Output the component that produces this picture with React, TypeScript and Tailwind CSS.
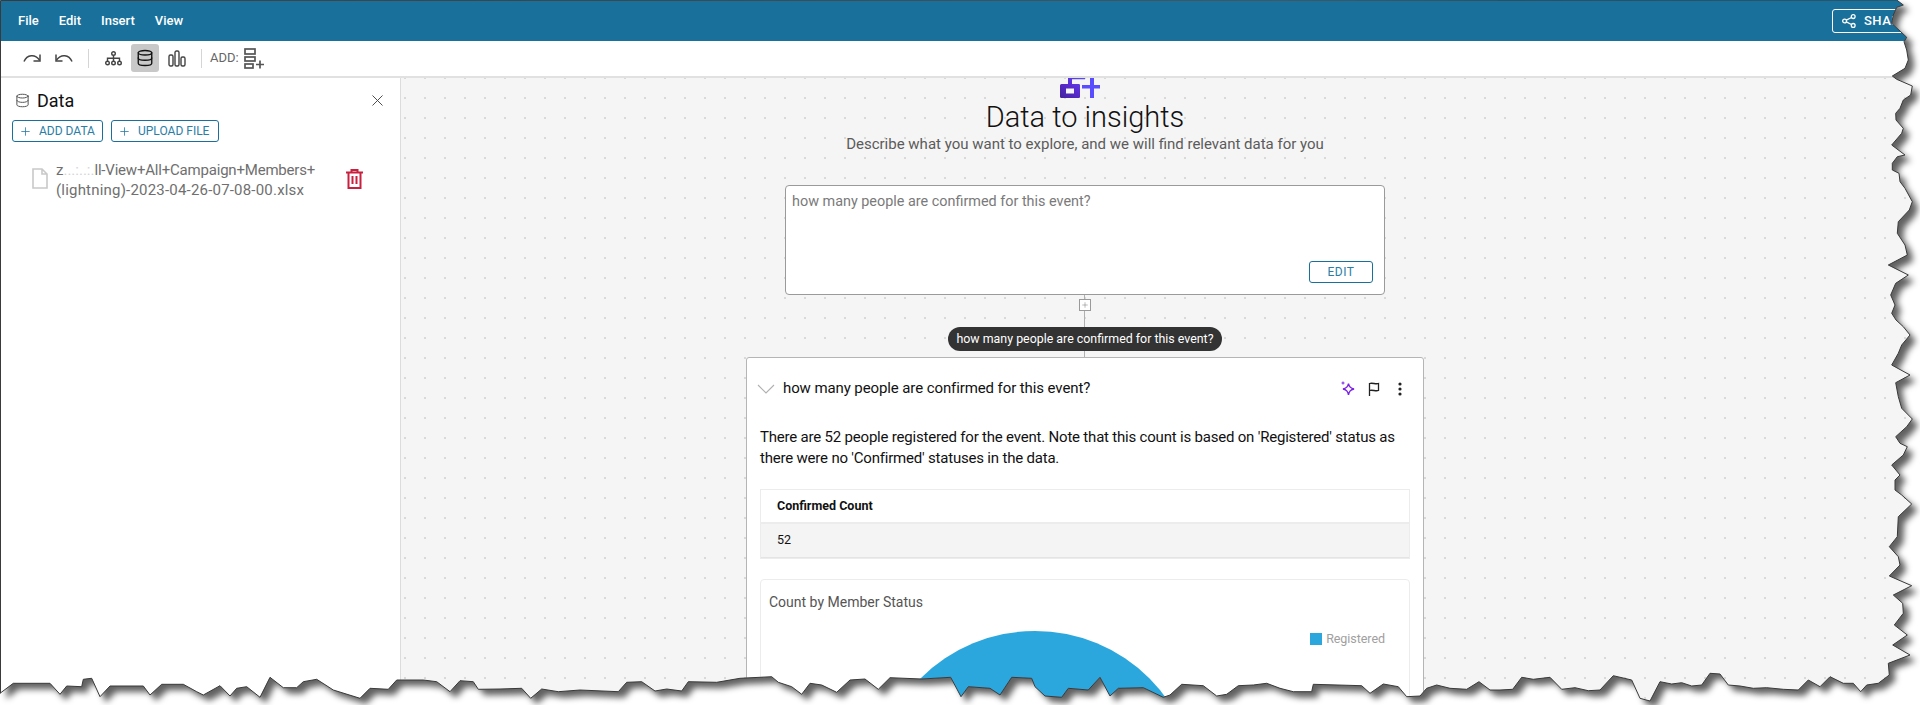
import { Database, Plus, X } from "lucide-react";

// torn page edge, traced from zoomed crops (crop px / 3 + crop origin)
const rightTop = [[110,0],[130,15],[110,22],[100,45],[95,70],[140,112],[132,125],[140,150],[145,180],[135,205],[97,228],[110,238],[157,258],[152,285],[130,300],[120,325],[107,340],[108,360],[130,385],[125,400],[95,435],[135,465],[112,470],[97,490],[97,510],[117,520],[120,545],[135,565],[157,605],[148,630],[115,665],[112,700],[135,735],[142,765],[85,795],[145,825],[107,850],[92,885],[105,915],[95,940]];
const rightBottom = [[108,0],[130,20],[150,45],[125,75],[115,100],[95,135],[150,165],[107,188],[115,230],[125,265],[157,297],[140,320],[107,350],[120,370],[142,380],[130,405],[95,435],[120,465],[105,480],[105,510],[125,525],[155,552],[115,590],[112,650],[88,680],[115,710],[120,735],[88,768],[155,797],[100,825],[128,850],[130,880],[103,915],[142,945]];
const bottomD = [[1178,75],[1230,105],[1165,130],[1168,165],[1135,190],[1100,195],[1082,215],[1060,190],[1030,190],[990,170],[960,200],[925,180],[895,210],[850,208],[800,203],[760,205],[720,198],[685,195],[660,162],[630,160],[605,195],[575,198],[545,188],[515,192],[480,185],[450,243],[420,235],[395,180],[340,167],[300,210],[265,212],[225,203],[185,208],[150,172],[100,178],[65,172],[38,208]];
const bottomC = [[1500,150],[1470,150],[1437,125],[1400,148],[1350,145],[1310,135],[1280,145],[1260,168],[1220,170],[1195,140],[1150,132],[1110,160],[1085,137],[940,133],[935,155],[880,155],[840,145],[800,130],[760,135],[715,137],[680,163],[650,168],[610,137],[545,133],[510,165],[490,172],[430,143],[355,145],[330,168],[300,112],[265,150],[205,145],[185,172],[135,168],[105,140],[95,115],[35,112]];
const bottomB = [[1500,165],[1470,145],[1405,140],[1383,170],[1352,112],[1265,117],[1170,113],[1135,148],[1095,117],[1050,120],[1010,157],[965,135],[930,130],[905,163],[875,140],[835,127],[815,110],[720,115],[650,127],[565,125],[545,153],[500,147],[465,153],[425,125],[380,127],[355,155],[240,150],[175,155],[125,147],[92,175],[65,145]];
const bottomA = [[1500,147],[1435,148],[1420,125],[1380,122],[1350,155],[1310,125],[1270,120],[1190,120],[1165,148],[1110,145],[1080,175],[1000,150],[950,118],[910,125],[890,143],[850,143],[810,112],[780,172],[740,140],[710,145],[690,168],[660,137],[610,165],[590,155],[550,133],[485,133],[450,165],[430,138],[330,138],[300,170],[275,115],[250,118],[245,140],[200,138],[180,163],[150,130],[40,130],[0,160]];

function mapped(list: number[][], ox: number, oy: number) {
  return list.map(([x, y]) => [ox + x / 3, oy + y / 3]);
}

const edge = [
  [0.5, 0.5],
  ...mapped(rightTop, 1860, 0),
  ...mapped(rightBottom, 1860, 320),
  ...mapped(bottomD, 1500, 620),
  ...mapped(bottomC, 1000, 640),
  ...mapped(bottomB, 500, 640),
  ...mapped(bottomA, 0, 640),
  [0.5, 693],
];

const edgePath = "M" + edge.map(([x, y]) => `${x.toFixed(1)} ${y.toFixed(1)}`).join("L") + "Z";
const outside = `M0 0H1920V705H0Z${edgePath}`;

function TornEdge() {
  return (
    <svg className="absolute inset-0" width="1920" height="705" viewBox="0 0 1920 705">
      <defs>
        <filter id="tornBlur" x="-5%" y="-5%" width="110%" height="110%">
          <feGaussianBlur stdDeviation="3.2" />
        </filter>
        <clipPath id="tornOutside">
          <path d={outside} clipRule="evenodd" />
        </clipPath>
      </defs>
      <path d={outside} fillRule="evenodd" fill="#ffffff" />
      <g clipPath="url(#tornOutside)">
        <path d={edgePath} transform="translate(6 6)" fill="#000000" fillOpacity="0.62" filter="url(#tornBlur)" />
      </g>
      <path d={edgePath} fill="none" stroke="#3a3a3a" strokeWidth="1" />
    </svg>
  );
}

function MenuBar() {
  return (
    <div className="h-[41px] shrink-0 bg-[#19709b] flex items-center text-white text-[13px] font-medium">
      <span className="ml-[18px]">File</span>
      <span className="ml-[20px]">Edit</span>
      <span className="ml-[20px]">Insert</span>
      <span className="ml-[20px]">View</span>
      <div className="ml-auto mr-[8px] w-[80px] h-[24px] mt-[1px] border border-white rounded-[3px] flex items-center pl-[9px] gap-[8px] text-[13px] tracking-[0.5px]">
        <svg width="14" height="14" viewBox="0 0 14 14" fill="none" stroke="white" strokeWidth="1.3">
          <circle cx="2.6" cy="7" r="1.9" />
          <circle cx="11.2" cy="2.6" r="1.9" />
          <circle cx="11.2" cy="11.4" r="1.9" />
          <path d="M4.3 6.1 9.5 3.5M4.3 7.9l5.2 2.6" />
        </svg>
        SHARE
      </div>
    </div>
  );
}

function Toolbar() {
  return (
    <div className="h-[37px] shrink-0 bg-white border-b-2 border-[#e1e1e1] flex items-center pl-[23px] pb-[1px]">
      <svg width="18" height="12" viewBox="0 0 18 12" fill="none" stroke="#444" strokeWidth="1.5">
        <path d="M1 9.5C4 2.5 12 1.5 16.5 8" />
        <path d="M17 2.5V9h-6.5" />
      </svg>
      <svg className="ml-[14px]" width="18" height="12" viewBox="0 0 18 12" fill="none" stroke="#444" strokeWidth="1.5">
        <path d="M17 9.5C14 2.5 6 1.5 1.5 8" />
        <path d="M1 2.5V9h6.5" />
      </svg>
      <div className="ml-[15px] w-px h-[19px] bg-[#d5d5d5]" />
      <svg className="ml-[16px]" width="17" height="15" viewBox="0 0 17 15" fill="none" stroke="#444" strokeWidth="1.4">
        <circle cx="8.5" cy="2.5" r="1.8" />
        <circle cx="2.5" cy="12" r="1.8" />
        <circle cx="8.5" cy="12" r="1.8" />
        <circle cx="14.5" cy="12" r="1.8" />
        <path d="M8.5 4.3V10M2.5 10V7.2h12V10" />
      </svg>
      <div className="ml-[9px] w-[28px] h-[28px] rounded-[3px] bg-[#c8c8c8] flex items-center justify-center">
        <Database size={18} strokeWidth={1.8} color="#111" />
      </div>
      <svg className="ml-[9px]" width="18" height="17" viewBox="0 0 18 17" fill="none" stroke="#444" strokeWidth="1.4">
        <rect x="1" y="5" width="4" height="11" rx="1.5" />
        <rect x="7" y="1" width="4" height="15" rx="1.5" />
        <rect x="13" y="7" width="4" height="9" rx="1.5" />
      </svg>
      <div className="ml-[15px] w-px h-[19px] bg-[#d5d5d5]" />
      <span className="ml-[8px] text-[13px] text-[#666]">ADD:</span>
      <svg className="ml-[5px]" width="20" height="21" viewBox="0 0 20 21" fill="none" stroke="#555" strokeWidth="1.7">
        <rect x="1" y="1" width="10" height="5" />
        <rect x="1" y="9" width="10" height="4" />
        <rect x="1" y="16" width="8" height="4" />
        <path d="M12 16.500h8M16 12.500v8" />
      </svg>
    </div>
  );
}

function OutlineButton({ label, className }: { label: string; className: string }) {
  return (
    <button className={`h-[22px] border border-[#19709b] rounded-[3px] flex items-center text-[12px] text-[#2a7ea6] ${className}`}>
      <Plus size={13} strokeWidth={1.5} className="ml-[6px] mr-[7px]" />
      {label}
    </button>
  );
}

function DataPanel() {
  return (
    <div className="w-[401px] shrink-0 bg-white border-r border-[#dcdcdc] relative">
      <div className="flex items-center h-[24px] mt-[10px] pl-[15px] pr-[13px]">
        <Database size={15} strokeWidth={1.6} color="#555" />
        <span className="ml-[7px] text-[18px] text-[#111]">Data</span>
        <X size={19} strokeWidth={1.2} color="#444" className="ml-auto" />
      </div>
      <div className="flex mt-[8px] pl-[12px] gap-[8px]">
        <OutlineButton label="ADD DATA" className="w-[91px]" />
        <OutlineButton label="UPLOAD FILE" className="w-[108px]" />
      </div>
      <div className="flex mt-[16px] pl-[32px]">
        <svg className="mt-[10px]" width="16" height="21" viewBox="0 0 16 21" fill="#fff" stroke="#c9c9c9" strokeWidth="1.6">
          <path d="M1 1h9l5 5v14H1zM10 1v5h5" />
        </svg>
        <div className="ml-[8px] w-[265px] text-[15px] leading-[20px] text-[#6f6f6f] mt-[2px]">
          z<span className="text-[#d4d4d4]">...:..:.</span>
          <span className="tracking-[-0.2px]">ll-View+All+Campaign+Members+</span>
          <br />
          <span className="tracking-[0.2px]">(lightning)-2023-04-26-07-08-00.xlsx</span>
        </div>
        <svg className="ml-[25px] mt-[11px]" width="17" height="20" viewBox="0 0 17 20" fill="none" stroke="#c8213f" strokeWidth="2">
          <path d="M0 3.5h17M5.5 3.5V1h6v2.5M2.5 3.5V19h12V3.5M6.5 7v8M10.5 7v8" />
        </svg>
      </div>
    </div>
  );
}

function ResultCard() {
  return (
    <div className="w-[678px] flex-1 bg-white border border-[#b5b5b5] rounded-t-[3px] relative">
      <div className="h-[61px] flex items-center pl-[10px] pr-[21px]">
        <svg width="18" height="10" viewBox="0 0 18 10" fill="none" stroke="#b0b0b0" strokeWidth="1.1">
          <path d="M1 1l8 8 8-8" />
        </svg>
        <span className="ml-[8px] text-[15px] tracking-[-0.1px] text-[#111]">how many people are confirmed for this event?</span>
        <svg className="ml-auto" width="16" height="16" viewBox="0 0 16 16" fill="none" stroke="#7a1fe6" strokeWidth="1.4">
          <path d="M8.500 2.500c.5 3.200 1.600 4.600 5.500 5.500-3.900.9-5 2.300-5.500 6-.5-3.700-1.600-5.100-5.500-6 3.900-.9 5-2.300 5.500-5.500Z" />
          <path d="M3 .5v3M1.500 2h3" strokeWidth="1" />
        </svg>
        <svg className="ml-[12px]" width="12" height="14" viewBox="0 0 12 14" fill="none" stroke="#222" strokeWidth="1.3">
          <path d="M1.500 14V1.500c3-1 6 1 9 0v7c-3 1-6-1-9 0" />
        </svg>
        <svg className="ml-[18px]" width="4" height="14" viewBox="0 0 4 14" fill="#222">
          <circle cx="2" cy="2" r="1.600" />
          <circle cx="2" cy="7" r="1.600" />
          <circle cx="2" cy="12" r="1.600" />
        </svg>
      </div>
      <div className="px-[13px]">
        <p className="mt-[8px] text-[15px] tracking-[-0.2px] leading-[21px] text-[#111]">
          There are 52 people registered for the event. Note that this count is based on 'Registered' status as there were no 'Confirmed' statuses in the data.
        </p>
        <div className="mt-[20px] border border-[#ececec] text-[12.5px] text-[#111]">
          <div className="h-[34px] flex items-center pl-[16px] font-bold border-b-2 border-[#ececec]">Confirmed Count</div>
          <div className="h-[34px] flex items-center pl-[16px] bg-[#f4f4f4] border-b border-[#e4e4e4]">52</div>
        </div>
        <div className="mt-[20px] h-[200px] border border-[#ececec] rounded-[4px] pl-[8px] pr-[24px]">
          <div className="mt-[12px] text-[14px] leading-[20px] text-[#555]">Count by Member Status</div>
          <div className="flex mt-[19px]">
            <svg className="ml-[104px] shrink-0" width="324" height="324" viewBox="0 0 324 324">
              <circle cx="162" cy="162" r="162" fill="#2ca7dd" />
            </svg>
            <div className="ml-auto mt-[1px] flex items-center h-[14px]">
              <div className="w-[12px] h-[12px] bg-[#2ca7dd]" />
              <span className="ml-[4px] text-[12.5px] tracking-[-0.05px] text-[#a0a0a0]">Registered</span>
            </div>
          </div>
        </div>
      </div>
    </div>
  );
}

function Canvas() {
  return (
    <div className="flex-1 min-w-0 bg-[#f5f5f5] bg-[radial-gradient(circle,#c2c2c2_0.55px,transparent_0.9px)] bg-[size:20px_20px] bg-[position:-6px_10px] overflow-hidden pl-[345px]">
      <div className="w-[678px] h-full flex flex-col items-center">
        <svg className="shrink-0 mr-[10px]" width="40" height="20" viewBox="0 0 40 20">
          <defs>
            <linearGradient id="logoGrad" x1="0" x2="1" y1="1" y2="0">
              <stop offset="0" stopColor="#42209a" />
              <stop offset="0.5" stopColor="#5a2bd0" />
              <stop offset="1" stopColor="#5a4dff" />
            </linearGradient>
          </defs>
          <path fill="url(#logoGrad)" fillRule="evenodd" d="M8 0h17v1.200H12V6h7a1.500 1.500 0 0 1 1 1v12a1.500 1.500 0 0 1-1 1H1.500A1.500 1.500 0 0 1 0 19V7.500A1.500 1.500 0 0 1 1.500 6H8ZM6 10.500V15.500H14V10.500Z" />
          <path fill="#5a4dff" d="M30 0h4v7h6v3.500h-6V20h-4V10.500H22V7h8Z" />
        </svg>
        <h1 className="mt-[2px] text-[29px] leading-[34px] font-light text-[#111]">Data to insights</h1>
        <p className="mt-[1px] text-[15px] leading-[18px] text-[#5b5b5b]">Describe what you want to explore, and we will find relevant data for you</p>
        <div className="mt-[32px] w-[600px] h-[110px] shrink-0 bg-white border border-[#9a9a9a] rounded-[4px] flex flex-col pl-[6px] pr-[11px]">
          <div className="mt-[6px] text-[14.4px] leading-[20px] text-[#7a7a7a]">how many people are confirmed for this event?</div>
          <button className="ml-auto mt-auto mb-[11px] w-[64px] h-[22px] border border-[#19709b] rounded-[3px] text-[12px] tracking-[0.5px] text-[#2a7ea6]">EDIT</button>
        </div>
        <div className="relative w-full h-[62px] shrink-0 flex flex-col items-center">
          <div className="absolute top-0 bottom-0 left-[338px] w-px bg-[#b0b0b0]" />
          <div className="relative mt-[4px] w-[12px] h-[12px] bg-white border border-[#9a9a9a] flex items-center justify-center">
            <Plus size={8} strokeWidth={1.5} color="#777" />
          </div>
          <div className="relative mt-[16px] w-[274px] h-[24px] rounded-full bg-[#333333] text-white text-[12.4px] flex items-center justify-center">how many people are confirmed for this event?</div>
        </div>
        <ResultCard />
      </div>
    </div>
  );
}

export default function App() {
  return (
    <div className="relative w-[1920px] h-[705px] overflow-hidden flex flex-col bg-white font-['Roboto',sans-serif]">
      <MenuBar />
      <Toolbar />
      <div className="flex-1 min-h-0 flex">
        <DataPanel />
        <Canvas />
      </div>
      <TornEdge />
    </div>
  );
}
